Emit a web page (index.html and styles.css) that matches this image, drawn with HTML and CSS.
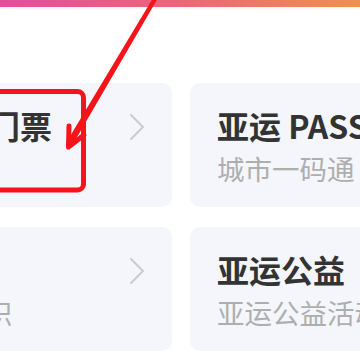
FILE: index.html
```html
<!DOCTYPE html>
<html lang="zh">
<head>
<meta charset="utf-8">
<link rel="stylesheet" href="styles.css">
</head>
<body>
<div class="page">
  <div class="topbar"></div>
  <div class="grid">
    <div class="card">
      <div class="text">
        <div class="title">亚运门票</div>
        <div class="sub">购票</div>
      </div>
      <svg class="chev" viewBox="0 0 16 28" width="16" height="28"><path d="M2 2 L14 14 L2 26" fill="none" stroke="#c9cbd0" stroke-width="2" stroke-linecap="round" stroke-linejoin="round"/></svg>
    </div>
    <div class="card">
      <div class="text">
        <div class="title">亚运 PASS</div>
        <div class="sub">城市一码通</div>
      </div>
    </div>
    <div class="card">
      <div class="text">
        <div class="title">指南</div>
        <div class="sub sub-wide">小知识</div>
      </div>
      <svg class="chev" viewBox="0 0 16 28" width="16" height="28"><path d="M2 2 L14 14 L2 26" fill="none" stroke="#c9cbd0" stroke-width="2" stroke-linecap="round" stroke-linejoin="round"/></svg>
    </div>
    <div class="card">
      <div class="text">
        <div class="title">亚运公益</div>
        <div class="sub">亚运公益活动</div>
      </div>
    </div>
  </div>
  <svg class="annot" viewBox="0 0 360 360" width="360" height="360">
    <rect x="-20" y="91.5" width="103.5" height="98.5" rx="6" fill="none" stroke="#f5141a" stroke-width="5"/>
    <polygon points="153,-2 158,-2 73,144 66,143" fill="#f5141a"/>
    <polyline points="69,126 68.5,147 84,135" fill="none" stroke="#f5141a" stroke-width="5" stroke-linecap="round" stroke-linejoin="round"/>
  </svg>
</div>
</body>
</html>
```
FILE: styles.css
```css
html, body {
  margin: 0;
  padding: 0;
  overflow: hidden;
  background: #ffffff;
}
.page {
  position: relative;
  width: 360px;
  height: 360px;
  overflow: hidden;
  font-family: "Noto Sans CJK SC", "Noto Sans", sans-serif;
}
.topbar {
  height: 7px;
  background: linear-gradient(90deg, #e84c9d 0%, #ed6579 50%, #f0904d 100%);
  box-shadow: 0 1px 3px rgba(0, 0, 0, 0.06);
}
.grid {
  display: grid;
  grid-template-columns: 275px 275px;
  grid-auto-rows: 124px;
  column-gap: 18px;
  row-gap: 20px;
  margin-left: -103px;
  margin-top: 76px;
}
.card {
  display: flex;
  align-items: flex-start;
  background: #f4f6fc;
  border-radius: 10px;
  padding: 22px 27px 0 27px;
  box-sizing: border-box;
}
.text {
  flex: 1;
  min-width: 0;
  white-space: nowrap;
}
.title {
  font-size: 32px;
  line-height: 40px;
  font-weight: 700;
  color: #333333;
}
.sub {
  font-size: 27.5px;
  line-height: 40px;
  margin-top: 3px;
  color: #aeaeae;
}
.sub-wide {
  letter-spacing: 3px;
}
.chev {
  flex: none;
  margin-top: 8px;
}
.annot {
  position: absolute;
  left: 0;
  top: 0;
  pointer-events: none;
}
```
